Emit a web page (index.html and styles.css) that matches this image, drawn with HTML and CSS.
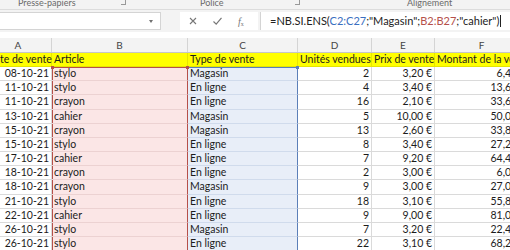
FILE: index.html
```html
<!DOCTYPE html>
<html lang="fr">
<head>
<meta charset="utf-8">
<title>NB.SI.ENS</title>
<link rel="stylesheet" href="styles.css">
</head>
<body>
<div class="ribbon">
  <div class="grp g1"><span class="lbl">Presse-papiers</span><span class="launch"></span></div>
  <div class="grp g2"><span class="lbl">Police</span><span class="launch"></span></div>
  <div class="grp g3"><span class="lbl">Alignement</span></div>
</div>
<div class="fbar">
  <div class="namebox"><span class="dd"></span></div>
  <div class="btns">
    <svg class="ic" width="10" height="10" viewBox="0 0 10 10"><path d="M2 2L8 8M8 2L2 8" stroke="#777" stroke-width="1.1" fill="none"/></svg>
    <svg class="ic" width="11" height="10" viewBox="0 0 11 10"><path d="M1.5 5.5L4.2 8.2L9.5 1.8" stroke="#777" stroke-width="1.2" fill="none"/></svg>
    <span class="fx"><i>f</i><sub>x</sub></span>
  </div>
  <div class="finput">=NB.SI.ENS(<span class="rb">C2:C27</span>;"Magasin";<span class="rr">B2:B27</span>;"cahier")<span class="caret"></span></div>
</div>
<div class="colheads">
  <div>A</div><div>B</div><div>C</div><div>D</div><div>E</div><div>F</div>
</div>
<div class="sheet">
  <div class="c hd">Date de vente</div><div class="c hd">Article</div><div class="c hd">Type de vente</div><div class="c hd">Unités vendues</div><div class="c hd">Prix de vente</div><div class="c hd">Montant de la vente</div>

  <div class="c r">08-10-21</div><div class="c b top">stylo</div><div class="c cc top">Magasin</div><div class="c r">2</div><div class="c r">3,20 €</div><div class="c r">6,40 €</div>
  <div class="c r">11-10-21</div><div class="c b">stylo</div><div class="c cc">En ligne</div><div class="c r">4</div><div class="c r">3,40 €</div><div class="c r">13,60 €</div>
  <div class="c r">11-10-21</div><div class="c b">crayon</div><div class="c cc">En ligne</div><div class="c r">16</div><div class="c r">2,10 €</div><div class="c r">33,60 €</div>
  <div class="c r">13-10-21</div><div class="c b">cahier</div><div class="c cc">Magasin</div><div class="c r">5</div><div class="c r">10,00 €</div><div class="c r">50,00 €</div>
  <div class="c r">15-10-21</div><div class="c b">crayon</div><div class="c cc">Magasin</div><div class="c r">13</div><div class="c r">2,60 €</div><div class="c r">33,80 €</div>
  <div class="c r">15-10-21</div><div class="c b">stylo</div><div class="c cc">En ligne</div><div class="c r">8</div><div class="c r">3,40 €</div><div class="c r">27,20 €</div>
  <div class="c r">17-10-21</div><div class="c b">cahier</div><div class="c cc">En ligne</div><div class="c r">7</div><div class="c r">9,20 €</div><div class="c r">64,40 €</div>
  <div class="c r">18-10-21</div><div class="c b">crayon</div><div class="c cc">En ligne</div><div class="c r">2</div><div class="c r">3,00 €</div><div class="c r">6,00 €</div>
  <div class="c r">18-10-21</div><div class="c b">crayon</div><div class="c cc">Magasin</div><div class="c r">9</div><div class="c r">3,00 €</div><div class="c r">27,00 €</div>
  <div class="c r">21-10-21</div><div class="c b">stylo</div><div class="c cc">En ligne</div><div class="c r">18</div><div class="c r">3,10 €</div><div class="c r">55,80 €</div>
  <div class="c r">22-10-21</div><div class="c b">cahier</div><div class="c cc">En ligne</div><div class="c r">9</div><div class="c r">9,00 €</div><div class="c r">81,00 €</div>
  <div class="c r">26-10-21</div><div class="c b">stylo</div><div class="c cc">Magasin</div><div class="c r">7</div><div class="c r">3,20 €</div><div class="c r">22,40 €</div>
  <div class="c r">26-10-21</div><div class="c b">stylo</div><div class="c cc">En ligne</div><div class="c r">22</div><div class="c r">3,10 €</div><div class="c r">68,20 €</div>

  <span class="handle h1"></span><span class="handle h2"></span><span class="handle h3"></span>
</div>
</body>
</html>
```

FILE: styles.css
```css
html, body {
  margin: 0;
  padding: 0;
  width: 510px;
  height: 250px;
  overflow: hidden;
  background: #ffffff;
  font-family: Lato, "Open Sans", sans-serif;
}

.ribbon {
  height: 9px;
  background: #f3f3f3;
  border-bottom: 1px solid #dcdcdc;
  display: flex;
  overflow: hidden;
}
.grp {
  position: relative;
  height: 9px;
}
.g1 { width: 135px; padding-left: 18px; box-sizing: border-box; }
.g2 { width: 170px; padding-left: 65px; box-sizing: border-box; }
.g3 { flex: 1; padding-left: 102px; box-sizing: border-box; }
.lbl {
  display: block;
  font-size: 9px;
  line-height: 9px;
  color: #6a6a6a;
  margin-top: -2px;
  white-space: nowrap;
}
.launch {
  position: absolute;
  top: 0;
  width: 4px;
  height: 4px;
  border-right: 1px solid #999;
  border-bottom: 1px solid #999;
}
.g1 .launch { left: 121px; }
.g2 .launch { left: 160px; }

.fbar {
  height: 22px;
  background: #f3f3f3;
  display: flex;
  align-items: flex-start;
  padding-top: 2px;
  box-sizing: border-box;
}
.namebox {
  width: 161px;
  height: 18px;
  background: #fff;
  border: 1px solid #d4d4d4;
  border-left: none;
  box-sizing: border-box;
  position: relative;
}
.dd {
  position: absolute;
  left: 149px;
  top: 7px;
  width: 0;
  height: 0;
  border-left: 2.5px solid transparent;
  border-right: 2.5px solid transparent;
  border-top: 3px solid #707070;
}
.btns {
  margin-left: 19px;
  width: 78px;
  height: 18px;
  background: #fff;
  display: flex;
  align-items: center;
  gap: 14px;
  padding-left: 8px;
  box-sizing: border-box;
}
.fx {
  font-family: "Liberation Serif", serif;
  font-size: 10px;
  color: #777;
  margin-left: 1px;
}
.fx sub { font-size: 6px; vertical-align: -1px; }
.finput {
  flex: 1;
  height: 18px;
  background: #fff;
  border-left: 1px solid #d4d4d4;
  margin-left: 2px;
  padding-left: 9px;
  font-size: 11px;
  line-height: 18px;
  color: #222;
  white-space: nowrap;
  box-sizing: border-box;
}
.rb { color: #3b6fc1; }
.rr { color: #b5504a; }
.caret {
  display: inline-block;
  width: 1px;
  height: 12px;
  background: #222;
  vertical-align: -2px;
  margin-left: 1px;
}

.colheads {
  display: grid;
  grid-template-columns: 67px 136px 110px 74px 63px 94px;
  margin-left: -15px;
  margin-top: 6px;
  height: 15px;
  background: #f3f3f3;
  border-bottom: 1px solid #c6c6c6;
  box-sizing: border-box;
}
.colheads div {
  border-right: 1px solid #d4d4d4;
  text-align: center;
  font-size: 10px;
  line-height: 14px;
  color: #444;
}

.sheet {
  display: grid;
  grid-template-columns: 67px 136px 110px 74px 63px 94px;
  grid-auto-rows: 14.17px;
  margin-left: -15px;
  position: relative;
}
.c {
  font-size: 10.5px;
  line-height: 13px;
  color: #1c1c1c;
  padding: 0 2px;
  border-right: 1px solid #dadada;
  border-bottom: 1px solid #dadada;
  box-sizing: border-box;
  white-space: nowrap;
  overflow: hidden;
}
.r { text-align: right; }
.hd {
  background: #ffff00;
  border-color: #e6e600;
  overflow: visible;
}
.b {
  background: #fbe6e6;
  border-bottom-color: #ecd2d2;
  border-right: 1px solid #b5504a;
  box-shadow: inset 1px 0 #b5504a;
}
.cc {
  background: #e8eef8;
  border-bottom-color: #d0dbec;
  border-right: 1px solid #5b7fb8;
}
.b.top { box-shadow: inset 1px 0 #b5504a, inset 0 1px #b5504a; }
.cc.top { box-shadow: inset 0 1px #5b7fb8; }

.handle {
  position: absolute;
  width: 3px;
  height: 3px;
  top: 13px;
}
.h1 { left: 66px; background: #b5504a; }
.h2 { left: 201px; background: #b5504a; }
.h3 { left: 311px; background: #5b7fb8; }
```
